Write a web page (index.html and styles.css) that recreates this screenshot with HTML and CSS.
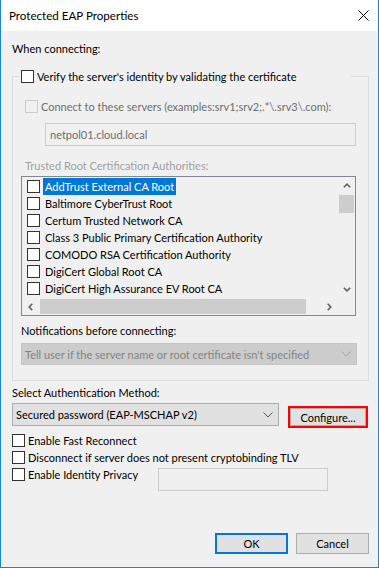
FILE: index.html
```html
<!DOCTYPE html>
<html lang="en">
<head>
    <meta charset="UTF-8">
    <title>Protected EAP Properties</title>
    <link rel="stylesheet" href="styles.css">
</head>
<body>
    <div class="window">
        <div class="titlebar">
            <span class="title">Protected EAP Properties</span>
            <svg class="close" width="11" height="11" viewBox="0 0 11 11">
                <path d="M0.5 0.5L10.5 10.5M10.5 0.5L0.5 10.5" stroke="#000" stroke-width="1"/>
            </svg>
        </div>

        <div class="content">
            <div class="label">When connecting:</div>

            <div class="group">
                <div class="group-head">
                    <span class="check"></span>
                    <span>Verify the server's identity by validating the certificate</span>
                </div>

                <div class="check-row connect disabled">
                    <span class="check"></span>
                    <span>Connect to these servers (examples:srv1;srv2;.*\.srv3\.com):</span>
                </div>
                <div class="textbox disabled servers">netpol01.cloud.local</div>

                <div class="label trusted">Trusted Root Certification Authorities:</div>
                <div class="listbox">
                    <div class="list-items">
                        <div class="item selected"><span class="check"></span><span class="item-text">AddTrust External CA Root</span></div>
                        <div class="item"><span class="check"></span><span class="item-text">Baltimore CyberTrust Root</span></div>
                        <div class="item"><span class="check"></span><span class="item-text">Certum Trusted Network CA</span></div>
                        <div class="item"><span class="check"></span><span class="item-text">Class 3 Public Primary Certification Authority</span></div>
                        <div class="item"><span class="check"></span><span class="item-text">COMODO RSA Certification Authority</span></div>
                        <div class="item"><span class="check"></span><span class="item-text">DigiCert Global Root CA</span></div>
                        <div class="item"><span class="check"></span><span class="item-text">DigiCert High Assurance EV Root CA</span></div>
                    </div>
                    <div class="vscroll">
                        <div class="sb-btn">
                            <svg width="8" height="5" viewBox="0 0 8 5"><path d="M0.8 4.3L4 1.2L7.2 4.3" fill="none" stroke="#606060" stroke-width="1.6"/></svg>
                        </div>
                        <div class="v-thumb"></div>
                        <div class="sb-fill"></div>
                        <div class="sb-btn">
                            <svg width="8" height="5" viewBox="0 0 8 5"><path d="M0.8 0.7L4 3.8L7.2 0.7" fill="none" stroke="#606060" stroke-width="1.6"/></svg>
                        </div>
                    </div>
                    <div class="hscroll">
                        <div class="sb-btn">
                            <svg width="5" height="8" viewBox="0 0 5 8"><path d="M4.3 0.8L1.2 4L4.3 7.2" fill="none" stroke="#606060" stroke-width="1.6"/></svg>
                        </div>
                        <div class="h-thumb"></div>
                        <div class="sb-fill"></div>
                        <div class="sb-btn">
                            <svg width="5" height="8" viewBox="0 0 5 8"><path d="M0.7 0.8L3.8 4L0.7 7.2" fill="none" stroke="#606060" stroke-width="1.6"/></svg>
                        </div>
                    </div>
                    <div class="corner"></div>
                </div>

                <div class="label notify">Notifications before connecting:</div>
                <div class="combo disabled wide">
                    <span>Tell user if the server name or root certificate isn't specified</span>
                    <svg width="10" height="6" viewBox="0 0 10 6"><path d="M0.5 0.5L5 5L9.5 0.5" fill="none" stroke="#a6a6a6" stroke-width="1"/></svg>
                </div>
            </div>

            <div class="label method-label">Select Authentication Method:</div>
            <div class="method-row">
                <div class="combo method">
                    <span>Secured password (EAP-MSCHAP v2)</span>
                    <svg width="10" height="6" viewBox="0 0 10 6"><path d="M0.5 0.5L5 5L9.5 0.5" fill="none" stroke="#5a5a5a" stroke-width="1"/></svg>
                </div>
                <button class="btn configure">Configure...</button>
            </div>

            <div class="options">
                <div class="check-row"><span class="check"></span><span>Enable Fast Reconnect</span></div>
                <div class="check-row"><span class="check"></span><span>Disconnect if server does not present cryptobinding TLV</span></div>
                <div class="check-row privacy">
                    <span class="check"></span>
                    <span class="privacy-text">Enable Identity Privacy</span>
                    <div class="textbox disabled identity"></div>
                </div>
            </div>

            <div class="actions">
                <button class="btn default">OK</button>
                <button class="btn">Cancel</button>
            </div>
        </div>
    </div>
</body>
</html>
```

FILE: styles.css
```css
:root {
    --face: #f0f0f0;
    --accent: #0078d7;
    --frame: #1883d7;
    --btn-bg: #e1e1e1;
    --btn-border: #adadad;
    --disabled-text: #6d6d6d;
}

* {
    box-sizing: border-box;
}

body {
    margin: 0;
    background: var(--face);
    font-family: Lato, "Noto Sans", sans-serif;
    font-size: 11px;
    color: #000;
}

.window {
    width: 379px;
    height: 568px;
    display: flex;
    flex-direction: column;
    background: var(--face);
    border: 1px solid var(--frame);
    border-top: none;
}

.titlebar {
    height: 31px;
    flex: none;
    display: flex;
    align-items: center;
    justify-content: space-between;
    padding: 0 9px 0 8px;
    background: #fff;
}

.title {
    font-size: 11.6px;
    line-height: 16px;
}

.content {
    flex: 1;
    display: flex;
    flex-direction: column;
    padding: 10px 9px 13px 11px;
}

.label {
    line-height: 16px;
    white-space: nowrap;
}

/* group box */
.group {
    margin-top: 19px;
    border: 1px solid #dcdcdc;
    padding: 0 12px 15px 8px;
    display: flex;
    flex-direction: column;
}

.group-head {
    align-self: flex-start;
    width: 332px;
    height: 16px;
    margin: -9px 0 0 -2px;
    padding: 0 2px;
    background: var(--face);
    display: flex;
    align-items: center;
    gap: 3px;
    white-space: nowrap;
}

.check {
    width: 13px;
    height: 13px;
    flex: none;
    border: 1px solid #333;
    background: #fff;
}

.check-row {
    height: 17px;
    display: flex;
    align-items: center;
    gap: 3px;
    white-space: nowrap;
}

.check-row.disabled {
    color: var(--disabled-text);
}

.check-row.disabled .check {
    border-color: #cccccc;
    background: var(--face);
}

.connect {
    margin: 14px 0 0 4px;
}

.textbox {
    height: 23px;
    border: 1px solid #cccccc;
    padding-left: 4px;
    line-height: 21px;
    background: var(--face);
}

.textbox.disabled {
    color: var(--disabled-text);
}

.servers {
    width: 311px;
    margin: 8px 0 0 24px;
}

.trusted {
    margin: 12px 0 0 4px;
    color: #a0a0a0;
}

/* certificate list */
.listbox {
    width: 335px;
    height: 140px;
    margin-top: 2px;
    border: 1px solid #828790;
    display: grid;
    grid-template-columns: 1fr 17px;
    grid-template-rows: 121px 17px;
}

.list-items {
    padding-top: 1px;
    overflow: hidden;
}

.item {
    height: 17px;
    display: flex;
    align-items: center;
    padding-left: 5px;
    white-space: nowrap;
}

.item-text {
    margin-left: 3px;
    padding: 0 2px;
    line-height: 17px;
}

.item.selected .item-text {
    background: var(--accent);
    color: #fff;
}

.vscroll {
    display: flex;
    flex-direction: column;
}

.hscroll {
    display: flex;
}

.sb-btn {
    width: 17px;
    height: 17px;
    flex: none;
    display: flex;
    align-items: center;
    justify-content: center;
}

.sb-fill {
    flex: 1;
}

.v-thumb {
    height: 18px;
    margin: 1px 1px 0 1px;
    background: #cdcdcd;
}

.h-thumb {
    width: 266px;
    margin: 1px 0 1px 1px;
    background: #cdcdcd;
}

.notify {
    margin-top: 7px;
}

/* combo boxes */
.combo {
    display: flex;
    align-items: center;
    justify-content: space-between;
    border: 1px solid var(--btn-border);
    background: var(--btn-bg);
    padding: 0 5px 0 3px;
    white-space: nowrap;
}

.combo.disabled {
    width: 336px;
    height: 22px;
    margin-top: 4px;
    border-color: #c4c4c4;
    background: #cccccc;
    color: #838383;
}

.method-label {
    margin-top: 4px;
}

.method-row {
    display: flex;
    align-items: flex-start;
    margin-top: 2px;
}

.combo.method {
    width: 267px;
    height: 23px;
}

/* buttons */
.btn {
    font: inherit;
    color: #000;
    background: var(--btn-bg);
    border: 1px solid var(--btn-border);
    padding: 0;
}

.configure {
    width: 76px;
    height: 18px;
    margin: 5px 0 0 11px;
    outline: 2px solid #ff0000;
}

.options {
    margin-top: 6px;
    display: flex;
    flex-direction: column;
}

.privacy {
    height: auto;
    align-items: flex-start;
}

.privacy .check {
    margin-top: 2px;
}

.privacy-text {
    width: 127px;
    line-height: 17px;
}

.identity {
    width: 170px;
    margin-top: 2px;
}

.actions {
    margin-top: auto;
    display: flex;
    justify-content: flex-end;
    gap: 8px;
}

.actions .btn {
    width: 73px;
    height: 21px;
}

.btn.default {
    border: 2px solid var(--accent);
}
```
